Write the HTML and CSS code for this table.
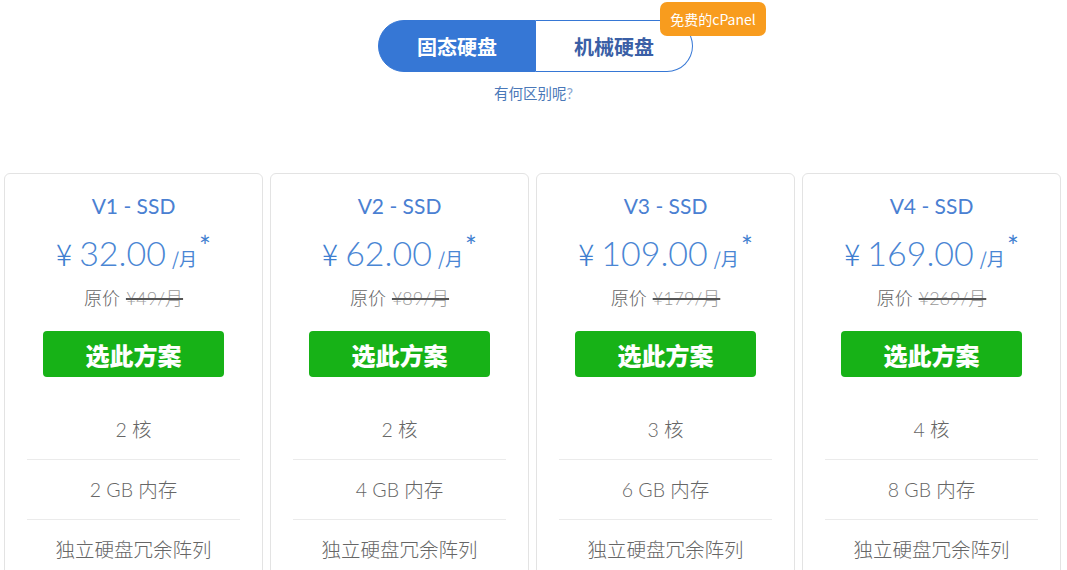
FILE: index.html
```html
<!DOCTYPE html>
<html lang="zh">
<head>
<meta charset="utf-8">
<link rel="stylesheet" href="styles.css">
</head>
<body>
<div class="top">
  <div class="toggle">
    <a class="tab active">固态硬盘</a>
    <a class="tab">机械硬盘</a>
    <span class="badge">免费的cPanel</span>
  </div>
  <a class="hint">有何区别呢<span class="q">?</span></a>
</div>
<div class="plans">
  <div class="card">
    <h3 class="title">V1 - SSD</h3>
    <div class="price"><span class="yen">¥</span>32.00<span class="per">/月</span><sup class="star">*</sup></div>
    <div class="orig">原价 <s>¥49/月</s></div>
    <a class="btn">选此方案</a>
    <ul class="feats"><li>2 核</li><li>2 GB 内存</li><li>独立硬盘冗余阵列</li></ul>
  </div>
  <div class="card">
    <h3 class="title">V2 - SSD</h3>
    <div class="price"><span class="yen">¥</span>62.00<span class="per">/月</span><sup class="star">*</sup></div>
    <div class="orig">原价 <s>¥89/月</s></div>
    <a class="btn">选此方案</a>
    <ul class="feats"><li>2 核</li><li>4 GB 内存</li><li>独立硬盘冗余阵列</li></ul>
  </div>
  <div class="card">
    <h3 class="title">V3 - SSD</h3>
    <div class="price"><span class="yen">¥</span>109.00<span class="per">/月</span><sup class="star">*</sup></div>
    <div class="orig">原价 <s>¥179/月</s></div>
    <a class="btn">选此方案</a>
    <ul class="feats"><li>3 核</li><li>6 GB 内存</li><li>独立硬盘冗余阵列</li></ul>
  </div>
  <div class="card">
    <h3 class="title">V4 - SSD</h3>
    <div class="price"><span class="yen">¥</span>169.00<span class="per">/月</span><sup class="star">*</sup></div>
    <div class="orig">原价 <s>¥269/月</s></div>
    <a class="btn">选此方案</a>
    <ul class="feats"><li>4 核</li><li>8 GB 内存</li><li>独立硬盘冗余阵列</li></ul>
  </div>
</div>
</body>
</html>
```
FILE: styles.css
```css
* { box-sizing: border-box; }
body {
  margin: 0;
  background: #fff;
  font-family: Lato, "Noto Sans CJK SC", sans-serif;
  color: #666;
}
.top {
  display: flex;
  flex-direction: column;
  align-items: center;
  padding-top: 20px;
}
.toggle {
  position: relative;
  display: flex;
  margin-left: 4px;
}
.tab {
  width: 158px;
  height: 52px;
  display: flex;
  align-items: center;
  justify-content: center;
  font-family: "Noto Sans CJK SC", sans-serif;
  font-weight: 700;
  font-size: 20px;
  color: #3a5fa6;
  border: 1px solid #3677d5;
  background: #fff;
}
.tab.active {
  background: #3677d5;
  color: #fff;
  border-radius: 26px 0 0 26px;
}
.tab:not(.active) {
  border-left: none;
  width: 157px;
  border-radius: 0 26px 26px 0;
}
.badge {
  position: absolute;
  left: 282px;
  top: -18px;
  width: 106px;
  height: 34px;
  background: #f89c1e;
  color: #fff;
  border-radius: 7px;
  font-family: "Noto Sans CJK SC", sans-serif;
  font-size: 14px;
  display: flex;
  align-items: center;
  justify-content: center;
}
.hint {
  margin-top: 11px;
  font-family: "Noto Sans CJK SC", sans-serif;
  font-size: 14.5px;
  color: #4a78b8;
  line-height: 20px;
}
.hint .q { color: #8aa6cf; font-family: Lato, sans-serif; }
.plans {
  display: grid;
  grid-template-columns: repeat(4, 259px);
  gap: 7px;
  padding-left: 4px;
  margin-top: 69px;
}
.card {
  border: 1px solid #e3e3e3;
  border-radius: 6px;
  padding-top: 19px;
  height: 420px;
  text-align: center;
}
.title {
  margin: 0;
  font-size: 21px;
  line-height: 26px;
  font-weight: 400;
  color: #4a80d2;
}
.price {
  margin-top: 14px;
  font-size: 34px;
  line-height: 40px;
  font-weight: 300;
  color: #4a86d4;
  display: flex;
  justify-content: center;
  align-items: baseline;
}
.price .yen { font-size: 30px; margin-right: 7px; font-family: "Noto Sans CJK SC", sans-serif; font-weight: 300; color: #3f7fd0; }
.price .per {
  font-size: 18px;
  margin-left: 6px;
  font-family: "Noto Sans CJK SC", sans-serif;
  font-weight: 400;
}
.price .star {
  font-size: 28px;
  font-weight: 400;
  line-height: 1;
  align-self: flex-start;
  margin-left: 2px;
  margin-top: -1px;
  color: #3f7fd0;
}
.orig {
  margin-top: 7px;
  font-family: "Noto Sans CJK SC", sans-serif;
  font-size: 18px;
  font-weight: 300;
  line-height: 24px;
  color: #666;
}
.orig s {
  color: #999;
  font-family: Lato, "Noto Sans CJK SC", sans-serif;
  font-weight: 300;
  font-size: 18px;
  margin-left: 2px;
  text-decoration-color: #555;
  text-decoration-thickness: 2px;
}
.btn {
  display: flex;
  align-items: center;
  justify-content: center;
  margin: 21px auto 0;
  width: 181px;
  height: 46px;
  background: #17b217;
  border-radius: 4px;
  color: #fff;
  font-family: "Noto Sans CJK SC", sans-serif;
  font-weight: 900;
  font-size: 24px;
}
.feats {
  list-style: none;
  margin: 23px 22px 0;
  padding: 0;
}
.feats li {
  height: 60px;
  line-height: 59px;
  border-bottom: 1px solid #ebebeb;
  font-family: Lato, "Noto Sans CJK SC", sans-serif;
  font-weight: 300;
  font-size: 19.5px;
  color: #666;
}
.feats li:last-child { border-bottom: none; }
```
